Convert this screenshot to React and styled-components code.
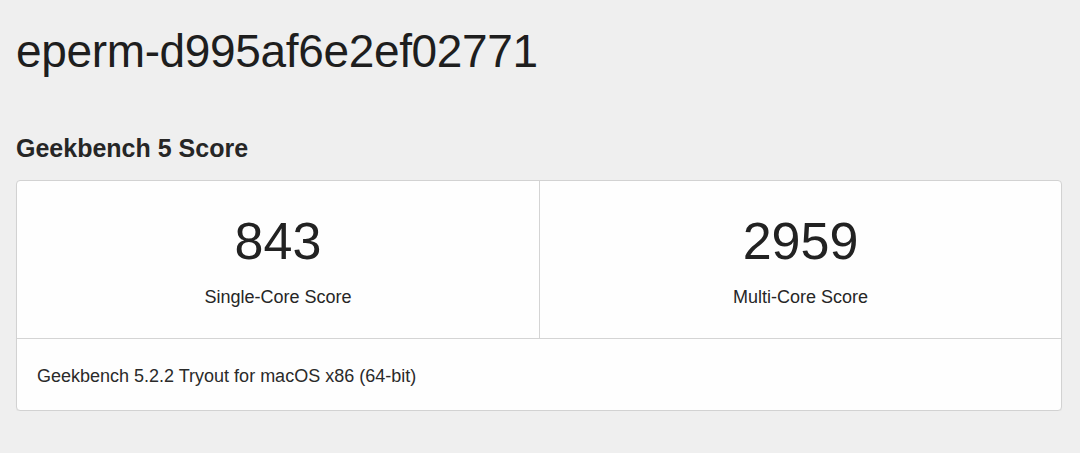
import styled, { createGlobalStyle } from "styled-components";

const GlobalStyle = createGlobalStyle`
  html, body {
    margin: 0;
    padding: 0;
    background: #efefef;
  }
  body {
    font-family: "Liberation Sans", Arial, Helvetica, sans-serif;
    color: #222;
  }
`;

const Page = styled.div`
  padding: 23px 18px 0 16px;
  width: 1080px;
  box-sizing: border-box;
`;

const Title = styled.h1`
  margin: 0;
  font-size: 46px;
  font-weight: 400;
  line-height: 56px;
  color: #1e1e1e;
  letter-spacing: -0.35px;
`;

const SectionTitle = styled.h2`
  margin: 54px 0 17px;
  font-size: 25px;
  font-weight: 700;
  line-height: 30px;
  color: #262626;
`;

const Card = styled.div`
  background: #fefefe;
  border: 1px solid #d2d2d2;
  border-radius: 4px;
  box-shadow: 0 1px 1px rgba(0, 0, 0, 0.04);
`;

const ScoreRow = styled.div`
  display: grid;
  grid-template-columns: 1fr 1fr;
  border-bottom: 1px solid #d4d4d4;
`;

const ScoreCell = styled.div`
  height: 157px;
  display: flex;
  flex-direction: column;
  align-items: center;
  padding-top: 31px;
  box-sizing: border-box;
  & + & {
    border-left: 1px solid #d4d4d4;
  }
`;

const ScoreValue = styled.div`
  font-size: 52px;
  line-height: 58px;
  color: #222;
`;

const ScoreLabel = styled.div`
  margin-top: 16px;
  font-size: 18px;
  line-height: 22px;
  color: #262626;
`;

const Footer = styled.div`
  height: 71px;
  box-sizing: border-box;
  display: flex;
  align-items: center;
  padding: 4px 0 0 20px;
  font-size: 18px;
  color: #2a2a2a;
`;

const scores = [
  { value: "843", label: "Single-Core Score" },
  { value: "2959", label: "Multi-Core Score" },
];

export default function App() {
  return (
    <Page>
      <GlobalStyle />
      <Title>eperm-d995af6e2ef02771</Title>
      <SectionTitle>Geekbench 5 Score</SectionTitle>
      <Card>
        <ScoreRow>
          {scores.map((s) => (
            <ScoreCell key={s.label}>
              <ScoreValue>{s.value}</ScoreValue>
              <ScoreLabel>{s.label}</ScoreLabel>
            </ScoreCell>
          ))}
        </ScoreRow>
        <Footer>Geekbench 5.2.2 Tryout for macOS x86 (64-bit)</Footer>
      </Card>
    </Page>
  );
}
